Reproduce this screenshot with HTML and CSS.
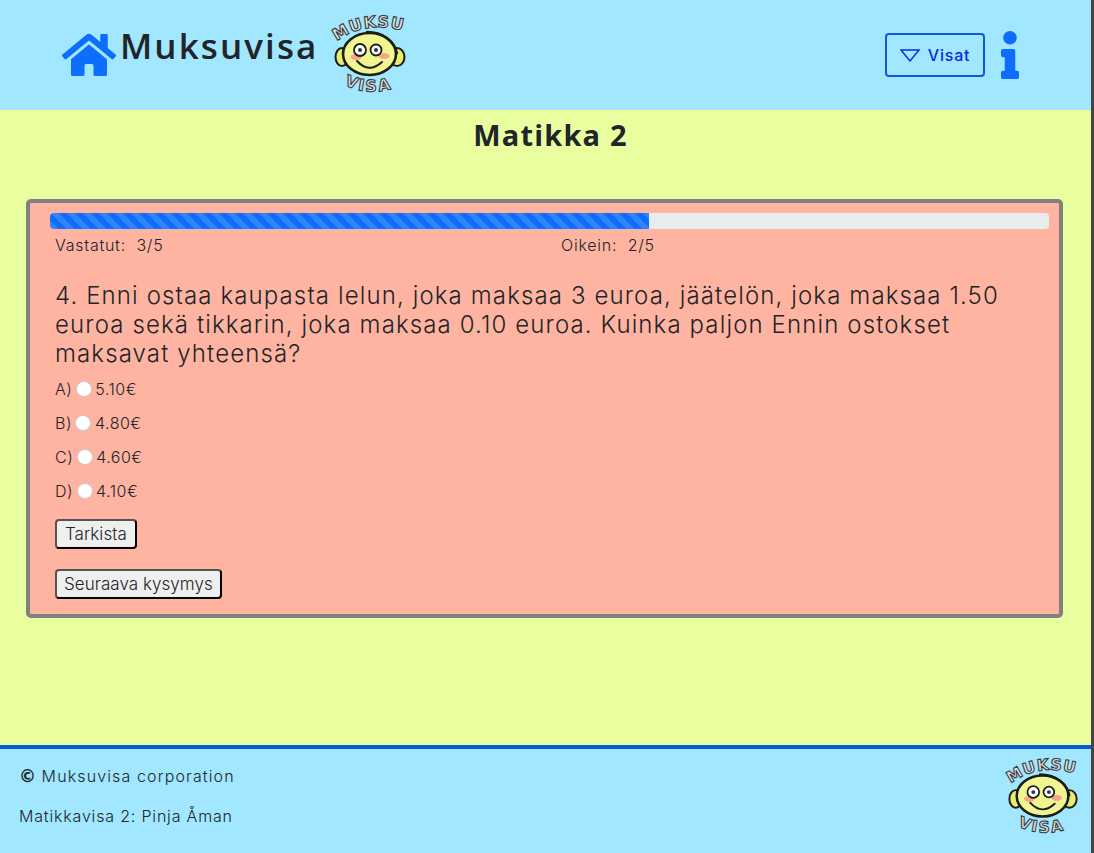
FILE: index.html
```html
<!DOCTYPE html>
<html lang="fi">
<head>
<meta charset="utf-8">
<title>Muksuvisa</title>
<link rel="stylesheet" href="styles.css">
</head>
<body>
<div class="page">
  <header class="top">
    <div class="brand">
      <svg class="home" viewBox="0 0 576 512"><path d="M280.37 148.26L96 300.11V464a16 16 0 0 0 16 16l112.06-.29a16 16 0 0 0 15.92-16V368a16 16 0 0 1 16-16h64a16 16 0 0 1 16 16v95.64a16 16 0 0 0 16 16.05L464 480a16 16 0 0 0 16-16V300L295.67 148.26a12.19 12.19 0 0 0-15.3 0zM571.6 251.47L488 182.56V44.05a12 12 0 0 0-12-12h-56a12 12 0 0 0-12 12v72.61L318.47 43a48 48 0 0 0-61 0L4.34 251.47a12 12 0 0 0-1.6 16.9l25.5 31A12 12 0 0 0 45.15 301l235.22-193.74a12.19 12.19 0 0 1 15.3 0L530.9 301a12 12 0 0 0 16.9-1.6l25.5-31a12 12 0 0 0-1.7-16.93z"/></svg>
      <span class="brand-name">Muksuvisa</span>
      <svg class="logo logo-top" viewBox="0 -8 80 92">
        <defs>
          <path id="arcA" d="M5 27 Q36 3 79 18"/>
          <path id="arcB" d="M13 70 Q38 82 67 72"/>
        </defs>
        <text class="logo-text"><textPath href="#arcA" startOffset="1">MUKSU</textPath></text>
        <ellipse class="ear" cx="11" cy="42" rx="6.5" ry="9"/>
        <ellipse class="ear" cx="66" cy="42" rx="7.5" ry="9"/>
        <ellipse class="face" cx="38.5" cy="39" rx="26.5" ry="21"/>
        <path class="brow" d="M36 17 C52 17 63 26 66 38"/>
        <ellipse class="cheek" cx="25" cy="42" rx="5.5" ry="3"/>
        <ellipse class="cheek" cx="53" cy="41" rx="5.5" ry="3"/>
        <circle class="eye" cx="29" cy="35" r="6"/><circle class="pupil" cx="29" cy="35" r="2"/>
        <circle class="eye" cx="45" cy="35" r="5.5"/><circle class="pupil" cx="45" cy="35" r="2"/>
        <path class="smile" d="M26 46 Q38 59 51 47"/>
        <text class="logo-text visa-word"><textPath href="#arcB" startOffset="0">VISA</textPath></text>
      </svg>
    </div>
    <nav class="actions">
      <button class="visat" type="button">
        <svg class="tri" viewBox="0 0 20 13"><path d="M1 1H19L10 12Z"/></svg>
        <span>Visat</span>
      </button>
      <svg class="info" viewBox="0 0 192 512"><path d="M20 424.229h20V279.771H20c-11.046 0-20-8.954-20-20V212c0-11.046 8.954-20 20-20h112c11.046 0 20 8.954 20 20v212.229h20c11.046 0 20 8.954 20 20V492c0 11.046-8.954 20-20 20H20c-11.046 0-20-8.954-20-20v-47.771c0-11.046 8.954-20 20-20zM96 0C56.235 0 24 32.235 24 72s32.235 72 72 72 72-32.235 72-72S135.764 0 96 0z"/></svg>
    </nav>
  </header>

  <main class="main">
    <h1 class="title">Matikka 2</h1>
    <section class="card">
      <div class="progress"><div class="bar"></div></div>
      <div class="content">
        <div class="stats">
          <span class="stat">Vastatut:&nbsp; 3/5</span>
          <span class="stat">Oikein:&nbsp; 2/5</span>
        </div>
        <p class="question">4. Enni ostaa kaupasta lelun, joka maksaa 3 euroa, jäätelön, joka maksaa 1.50 euroa sekä tikkarin, joka maksaa 0.10 euroa. Kuinka paljon Ennin ostokset maksavat yhteensä?</p>
        <label class="option">A) <input class="radio" type="radio" name="q"> 5.10€</label>
        <label class="option">B) <input class="radio" type="radio" name="q"> 4.80€</label>
        <label class="option">C) <input class="radio" type="radio" name="q"> 4.60€</label>
        <label class="option">D) <input class="radio" type="radio" name="q"> 4.10€</label>
        <button class="btn btn-check" type="button">Tarkista</button>
        <button class="btn" type="button">Seuraava kysymys</button>
      </div>
    </section>
  </main>

  <footer class="bottom">
    <div class="foot-text">
      <p class="foot-line foot-first"><b class="copy">©</b> Muksuvisa corporation</p>
      <p class="foot-line">Matikkavisa 2: Pinja Åman</p>
    </div>
    <svg class="logo logo-foot" viewBox="0 -8 80 92">
      <defs>
        <path id="arcC" d="M5 27 Q36 3 79 18"/>
        <path id="arcD" d="M13 70 Q38 82 67 72"/>
      </defs>
      <text class="logo-text"><textPath href="#arcC" startOffset="1">MUKSU</textPath></text>
      <ellipse class="ear" cx="11" cy="42" rx="6.5" ry="9"/>
      <ellipse class="ear" cx="66" cy="42" rx="7.5" ry="9"/>
      <ellipse class="face" cx="38.5" cy="39" rx="26.5" ry="21"/>
      <path class="brow" d="M36 17 C52 17 63 26 66 38"/>
      <ellipse class="cheek" cx="25" cy="42" rx="5.5" ry="3"/>
      <ellipse class="cheek" cx="53" cy="41" rx="5.5" ry="3"/>
      <circle class="eye" cx="29" cy="35" r="6"/><circle class="pupil" cx="29" cy="35" r="2"/>
      <circle class="eye" cx="45" cy="35" r="5.5"/><circle class="pupil" cx="45" cy="35" r="2"/>
      <path class="smile" d="M26 46 Q38 59 51 47"/>
      <text class="logo-text visa-word"><textPath href="#arcD" startOffset="0">VISA</textPath></text>
    </svg>
  </footer>
</div>
</body>
</html>
```
FILE: styles.css
```css
* { box-sizing: border-box; }
html, body { margin: 0; padding: 0; height: 100%; }
body {
  background: #444;
  font-family: "Inter", "Noto Sans", sans-serif;
  font-weight: 300;
  color: #212529;
  overflow: hidden;
}
.page {
  width: 1091px;
  height: 853px;
  display: flex;
  flex-direction: column;
  background: #e9ff9f;
}
.top {
  height: 110px;
  flex: none;
  background: #a0e7ff;
  display: flex;
  justify-content: space-between;
  align-items: flex-start;
  padding: 0 72px 0 62px;
}
.brand { display: flex; align-items: flex-start; }
.home { width: 54px; height: 48px; margin-top: 31px; fill: #0d6efd; flex: none; }
.brand-name {
  font-family: "Open Sans", sans-serif;
  font-weight: 600;
  font-size: 35px;
  letter-spacing: 2.1px;
  line-height: 48px;
  margin: 22px 0 0 4px;
}
.logo { display: block; flex: none; overflow: visible; }
.logo-top { width: 80px; height: 92px; margin: 7px 0 0 12px; }
.ear { fill: #e6ee72; stroke: #1c1c1c; stroke-width: 2; }
.face { fill: #eff68f; stroke: #1c1c1c; stroke-width: 2.6; }
.brow { fill: none; stroke: #1c1c1c; stroke-width: 2.4; stroke-linecap: round; }
.cheek { fill: #f5a58c; }
.eye { fill: #fff; stroke: #1c1c1c; stroke-width: 1.8; }
.pupil { fill: #333; }
.smile { fill: none; stroke: #1c1c1c; stroke-width: 2; stroke-linecap: round; }
.logo-text {
  font-family: "DejaVu Sans", sans-serif;
  font-weight: 700;
  font-size: 16px;
  letter-spacing: 0.8px;
  fill: #dfe3e6;
  stroke: #3a3a3a;
  stroke-width: 1.1;
}
.visa-word { letter-spacing: 2px; }
.actions { display: flex; align-items: flex-start; gap: 16px; }
.visat {
  width: 100px;
  height: 44px;
  margin-top: 33px;
  display: flex;
  align-items: center;
  justify-content: center;
  gap: 8px;
  background: transparent;
  border: 2px solid #0d5bd8;
  border-radius: 4px;
  color: #0a2be0;
  font: 500 16px "Inter", sans-serif;
  letter-spacing: 0.8px;
  padding: 0;
}
.tri { width: 20px; height: 13px; fill: none; stroke: #0a2be0; stroke-width: 1.4; }
.info { width: 18px; height: 48px; margin-top: 31px; fill: #0d6efd; }

.main { flex: 1; display: flex; flex-direction: column; }
.title {
  margin: 0;
  padding: 6px 0 0 10px;
  height: 89px;
  text-align: center;
  font-family: "Open Sans", sans-serif;
  font-weight: 700;
  font-size: 29px;
  line-height: 37px;
  letter-spacing: 1.2px;
}
.card {
  margin: 0 28px 0 26px;
  border: 4px solid #808080;
  border-radius: 5px;
  background: #ffb4a2;
  padding: 10px 10px 15px 20px;
}
.progress {
  height: 16px;
  background: #e9ecef;
  border-radius: 4px;
  overflow: hidden;
}
.bar {
  width: 60%;
  height: 100%;
  background-color: #0d6efd;
  background-image: linear-gradient(45deg, rgba(255,255,255,.15) 25%, transparent 25%, transparent 50%, rgba(255,255,255,.15) 50%, rgba(255,255,255,.15) 75%, transparent 75%, transparent);
  background-size: 16px 16px;
}
.content { padding-left: 5px; padding-right: 20px; display: flex; flex-direction: column; align-items: flex-start; }
.stats { display: flex; width: 100%; height: 24px; margin-top: 4px; font-size: 16px; line-height: 24px; letter-spacing: 0.75px; }
.stat { width: 506px; flex: none; }
.question {
  margin: 25px 0 0;
  font-size: 24px;
  line-height: 28.8px;
  font-weight: 300;
  letter-spacing: 1.12px;
}
.option {
  display: flex;
  align-items: center;
  gap: 3.5px;
  height: 24px;
  margin-top: 10px;
  font-size: 16px;
  letter-spacing: 0.5px;
}
.question + .option { margin-top: 9px; }
.radio {
  appearance: none;
  width: 16px;
  height: 16px;
  margin: 0;
  background: #fff;
  border: 1px solid #ccc;
  border-radius: 50%;
}
.btn {
  font-family: "Inter", sans-serif;
  font-weight: 300;
  font-size: 17px;
  height: 30px;
  padding: 0 7px;
  background: #efefef;
  color: #212529;
  border: 2px outset #000;
  border-radius: 4px;
  margin-top: 20px;
  letter-spacing: 0.05px;
}
.option + .btn { margin-top: 16px; }
.btn-check { padding: 0 8px; }

.bottom {
  height: 108px;
  flex: none;
  background: #a0e7ff;
  border-top: 4px solid #0d5bd8;
  display: flex;
  justify-content: space-between;
  align-items: flex-start;
  padding: 0 8px 0 19px;
}
.foot-text { padding-top: 15px; }
.foot-line { margin: 0 0 16px; font-size: 16px; line-height: 24px; letter-spacing: 0.82px; }
.foot-first { letter-spacing: 1.12px; }
.copy { font-family: "DejaVu Sans", sans-serif; font-weight: 700; font-size: 17px; letter-spacing: 0; }
.logo-foot { width: 78px; height: 90px; margin-top: 1px; }
```
